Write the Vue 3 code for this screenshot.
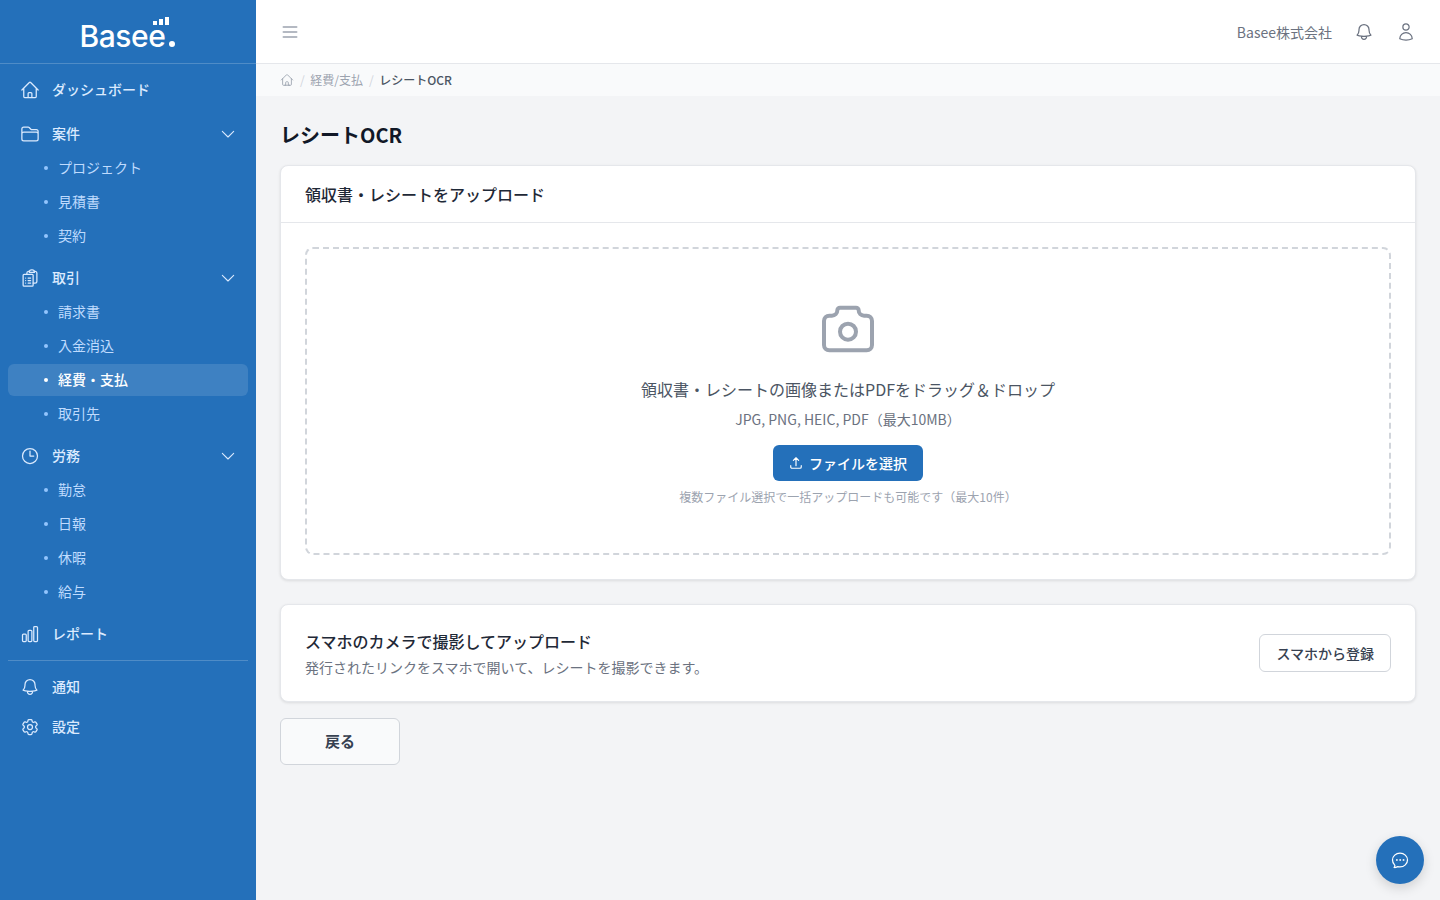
<template>
  <div class="layout" lang="ja">
    <aside class="sidebar">
      <div class="logo">
        <div class="logo-mark">
          <span class="logo-text">Basee</span><span class="logo-dot"></span>
          <span class="logo-bars"><i class="b1"></i><i class="b2"></i><i class="b3"></i></span>
        </div>
      </div>
      <nav class="nav">
        <section v-for="item in menu" :key="item.label" class="nav-group">
          <a class="nav-item">
            <svg class="nav-icon" viewBox="0 0 24 24" fill="none" stroke="currentColor" stroke-width="1.5" stroke-linecap="round" stroke-linejoin="round">
              <path v-for="d in icons[item.icon]" :key="d" :d="d" />
            </svg>
            <span class="nav-text">{{ item.label }}</span>
            <svg v-if="item.children" class="chevron" viewBox="0 0 24 24" fill="none" stroke="currentColor" stroke-width="1.6" stroke-linecap="round" stroke-linejoin="round">
              <path d="M3.5 8l8.5 8.5 8.5-8.5" />
            </svg>
          </a>
          <a
            v-for="child in item.children"
            :key="child"
            class="nav-sub"
            :class="{ active: child === '経費・支払' }"
          >
            <span class="bullet"></span>
            <span class="nav-text">{{ child }}</span>
          </a>
        </section>
        <hr class="nav-line" />
        <div class="nav-bottom">
          <a v-for="item in bottomMenu" :key="item.label" class="nav-item">
            <svg class="nav-icon" viewBox="0 0 24 24" fill="none" stroke="currentColor" stroke-width="1.5" stroke-linecap="round" stroke-linejoin="round">
              <path v-for="d in icons[item.icon]" :key="d" :d="d" />
            </svg>
            <span class="nav-text">{{ item.label }}</span>
          </a>
        </div>
      </nav>
    </aside>

    <div class="main">
      <header class="topbar">
        <svg class="menu-btn" viewBox="0 0 24 24" fill="none" stroke="currentColor" stroke-width="2" stroke-linecap="round">
          <path d="M4 6h16M4 12h16M4 18h16" />
        </svg>
        <div class="top-right">
          <span class="company">Basee株式会社</span>
          <svg class="top-icon" viewBox="0 0 24 24" fill="none" stroke="currentColor" stroke-width="1.5" stroke-linecap="round" stroke-linejoin="round">
            <path v-for="d in icons.bell" :key="d" :d="d" />
          </svg>
          <svg class="top-icon" viewBox="0 0 24 24" fill="none" stroke="currentColor" stroke-width="1.5" stroke-linecap="round" stroke-linejoin="round">
            <path v-for="d in icons.user" :key="d" :d="d" />
          </svg>
        </div>
      </header>

      <div class="crumbs">
        <svg class="crumb-home" viewBox="0 0 24 24" fill="none" stroke="currentColor" stroke-width="1.5" stroke-linecap="round" stroke-linejoin="round">
          <path v-for="d in icons.home" :key="d" :d="d" />
        </svg>
        <span class="sep">/</span>
        <span class="crumb-link">経費/支払</span>
        <span class="sep">/</span>
        <span class="crumb-now">レシートOCR</span>
      </div>

      <main class="content">
        <h1 class="page-title">レシートOCR</h1>

        <div class="card">
          <div class="card-head">領収書・レシートをアップロード</div>
          <div class="card-body">
            <div class="dropzone">
              <svg class="camera" viewBox="0 0 24 24" fill="none" stroke="currentColor" stroke-width="1.5" stroke-linecap="round" stroke-linejoin="round">
                <path d="M5 7h1a2 2 0 0 0 2-2a1 1 0 0 1 1-1h6a1 1 0 0 1 1 1a2 2 0 0 0 2 2h1a2 2 0 0 1 2 2v9a2 2 0 0 1-2 2h-14a2 2 0 0 1-2-2v-9a2 2 0 0 1 2-2" />
                <circle cx="12" cy="13" r="3" />
              </svg>
              <p class="drop-title">領収書・レシートの画像またはPDFをドラッグ＆ドロップ</p>
              <p class="drop-types">JPG, PNG, HEIC, PDF（最大10MB）</p>
              <button class="btn-primary">
                <svg viewBox="0 0 24 24" fill="none" stroke="currentColor" stroke-width="2" stroke-linecap="round" stroke-linejoin="round">
                  <path d="M3 16.5v2.25A2.25 2.25 0 0 0 5.25 21h13.5A2.25 2.25 0 0 0 21 18.75V16.5m-13.5-9L12 3m0 0 4.5 4.5M12 3v13.5" />
                </svg>
                ファイルを選択
              </button>
              <p class="drop-note">複数ファイル選択で一括アップロードも可能です（最大10件）</p>
            </div>
          </div>
        </div>

        <div class="card mobile-card">
          <div class="mobile-info">
            <div class="mobile-title">スマホのカメラで撮影してアップロード</div>
            <div class="mobile-text">発行されたリンクをスマホで開いて、レシートを撮影できます。</div>
          </div>
          <button class="btn-outline">スマホから登録</button>
        </div>

        <button class="btn-back">戻る</button>
      </main>
    </div>

    <button class="chat-btn">
      <svg viewBox="0 0 24 24" fill="none" stroke="currentColor" stroke-width="1.5" stroke-linecap="round" stroke-linejoin="round">
        <path d="M8.625 12a.375.375 0 1 1-.75 0 .375.375 0 0 1 .75 0Zm4 0a.375.375 0 1 1-.75 0 .375.375 0 0 1 .75 0Zm4 0a.375.375 0 1 1-.75 0 .375.375 0 0 1 .75 0Z" />
        <path d="M12 20.25c4.97 0 9-3.694 9-8.25s-4.03-8.25-9-8.25S3 7.444 3 12c0 2.104.859 4.023 2.273 5.48.432.447.74 1.04.586 1.641a4.483 4.483 0 0 1-.923 1.785A5.969 5.969 0 0 0 6 21c1.282 0 2.47-.402 3.445-1.087.81.22 1.668.337 2.555.337Z" />
      </svg>
    </button>
  </div>
</template>

<script setup>
const icons = {
  home: ['m2.25 12 8.954-8.955c.44-.439 1.152-.439 1.591 0L21.75 12M4.5 9.75v10.125c0 .621.504 1.125 1.125 1.125H9.75v-4.875c0-.621.504-1.125 1.125-1.125h2.25c.621 0 1.125.504 1.125 1.125V21h4.125c.621 0 1.125-.504 1.125-1.125V9.75M8.25 21h8.25'],
  folder: ['M2.25 12.75V12A2.25 2.25 0 0 1 4.5 9.75h15A2.25 2.25 0 0 1 21.75 12v.75m-8.69-6.44-2.12-2.12a1.5 1.5 0 0 0-1.061-.44H4.5A2.25 2.25 0 0 0 2.25 6v12a2.25 2.25 0 0 0 2.25 2.25h15A2.25 2.25 0 0 0 21.75 18V9a2.25 2.25 0 0 0-2.25-2.25h-5.379a1.5 1.5 0 0 1-1.06-.44Z'],
  docs: [
    'M8.25 7.5V6.108c0-1.135.845-2.098 1.976-2.192.373-.03.748-.057 1.123-.08M15.75 18H18a2.25 2.25 0 0 0 2.25-2.25V6.108c0-1.135-.845-2.098-1.976-2.192a48.424 48.424 0 0 0-1.123-.08',
    'M17.15 3.836A2.251 2.251 0 0 0 15 2.25h-1.5a2.251 2.251 0 0 0-2.15 1.586m5.8 0c.065.21.1.433.1.664v.75h-6V4.5c0-.231.035-.454.1-.664',
    'M4.875 7.5h9.75c.621 0 1.125.504 1.125 1.125v12c0 .621-.504 1.125-1.125 1.125h-9.75c-.621 0-1.125-.504-1.125-1.125v-12c0-.621.504-1.125 1.125-1.125Z',
    'M6.75 12h.008M6.75 15h.008M6.75 18h.008M9.75 12h3M9.75 15h3M9.75 18h3',
  ],
  clock: ['M12 6v6h4.5m4.5 0a9 9 0 1 1-18 0 9 9 0 0 1 18 0Z'],
  chart: ['M3 13.125C3 12.504 3.504 12 4.125 12h2.25c.621 0 1.125.504 1.125 1.125v6.75C7.5 20.496 6.996 21 6.375 21h-2.25A1.125 1.125 0 0 1 3 19.875v-6.75ZM9.75 8.625c0-.621.504-1.125 1.125-1.125h2.25c.621 0 1.125.504 1.125 1.125v11.25c0 .621-.504 1.125-1.125 1.125h-2.25a1.125 1.125 0 0 1-1.125-1.125V8.625ZM16.5 4.125c0-.621.504-1.125 1.125-1.125h2.25C20.496 3 21 3.504 21 4.125v15.75c0 .621-.504 1.125-1.125 1.125h-2.25a1.125 1.125 0 0 1-1.125-1.125V4.125Z'],
  bell: ['M14.857 17.082a23.848 23.848 0 0 0 5.454-1.31A8.967 8.967 0 0 1 18 9.75V9A6 6 0 0 0 6 9v.75a8.967 8.967 0 0 1-2.312 6.022c1.733.64 3.56 1.085 5.455 1.31m5.714 0a24.255 24.255 0 0 1-5.714 0m5.714 0a3 3 0 1 1-5.714 0'],
  user: ['M15.75 6a3.75 3.75 0 1 1-7.5 0 3.75 3.75 0 0 1 7.5 0ZM4.501 20.118a7.5 7.5 0 0 1 14.998 0A17.933 17.933 0 0 1 12 21.75c-2.676 0-5.216-.584-7.499-1.632Z'],
  cog: [
    'M9.594 3.94c.09-.542.56-.94 1.11-.94h2.593c.55 0 1.02.398 1.11.94l.213 1.281c.063.374.313.686.645.87.074.04.147.083.22.127.325.196.72.257 1.075.124l1.217-.456a1.125 1.125 0 0 1 1.37.49l1.296 2.247a1.125 1.125 0 0 1-.26 1.431l-1.003.827c-.293.241-.438.613-.43.992a7.723 7.723 0 0 1 0 .255c-.008.378.137.75.43.991l1.004.827c.424.35.534.955.26 1.43l-1.298 2.247a1.125 1.125 0 0 1-1.369.491l-1.217-.456c-.355-.133-.75-.072-1.076.124a6.47 6.47 0 0 1-.22.128c-.331.183-.581.495-.644.869l-.213 1.281c-.09.543-.56.94-1.11.94h-2.594c-.55 0-1.019-.398-1.11-.94l-.213-1.281c-.062-.374-.312-.686-.644-.87a6.52 6.52 0 0 1-.22-.127c-.325-.196-.72-.257-1.076-.124l-1.217.456a1.125 1.125 0 0 1-1.369-.49l-1.297-2.247a1.125 1.125 0 0 1 .26-1.431l1.004-.827c.292-.24.437-.613.43-.991a6.932 6.932 0 0 1 0-.255c.007-.38-.138-.751-.43-.992l-1.004-.827a1.125 1.125 0 0 1-.26-1.43l1.297-2.247a1.125 1.125 0 0 1 1.37-.491l1.216.456c.356.133.751.072 1.076-.124.072-.044.146-.086.22-.128.332-.183.582-.495.644-.869l.214-1.28Z',
    'M15 12a3 3 0 1 1-6 0 3 3 0 0 1 6 0Z',
  ],
}

const menu = [
  { label: 'ダッシュボード', icon: 'home' },
  { label: '案件', icon: 'folder', children: ['プロジェクト', '見積書', '契約'] },
  { label: '取引', icon: 'docs', children: ['請求書', '入金消込', '経費・支払', '取引先'] },
  { label: '労務', icon: 'clock', children: ['勤怠', '日報', '休暇', '給与'] },
  { label: 'レポート', icon: 'chart' },
]

const bottomMenu = [
  { label: '通知', icon: 'bell' },
  { label: '設定', icon: 'cog' },
]
</script>

<style>
html,
body {
  margin: 0;
  background: #f3f4f6;
}
</style>

<style scoped>
.layout {
  display: flex;
  min-height: 900px;
  font-family: "Noto Sans CJK JP", "Noto Sans", sans-serif;
  color: #111827;
}
.sidebar {
  width: 256px;
  flex-shrink: 0;
  background: #2470ba;
  color: #dbeafe;
}
.logo {
  height: 63px;
  border-bottom: 1px solid rgba(255, 255, 255, 0.2);
  display: flex;
  justify-content: center;
  align-items: flex-end;
}
.logo-mark {
  position: relative;
  display: flex;
  align-items: baseline;
  margin-right: 1.5px;
  padding-bottom: 10px;
}
.logo-text {
  font-family: Inter, sans-serif;
  font-size: 30px;
  font-weight: 500;
  line-height: 34px;
  letter-spacing: -0.4px;
  color: #fff;
}
.logo-dot {
  width: 6px;
  height: 6px;
  margin-left: 3.5px;
  border-radius: 50%;
  background: #fff;
}
.logo-bars {
  position: absolute;
  right: 6px;
  top: -2px;
  display: flex;
  align-items: flex-end;
  gap: 2px;
  height: 8px;
}
.logo-bars i {
  width: 4px;
  background: #fff;
}
.b1 { height: 4px; }
.b2 { height: 6px; }
.b3 { height: 8px; }
.nav {
  padding: 8px;
}
.nav-group {
  margin-bottom: 8px;
}
.nav-item {
  height: 36px;
  padding: 0 12px;
  display: flex;
  align-items: center;
  gap: 12px;
  font-size: 14px;
  font-weight: 500;
  line-height: 20px;
  color: #dbeafe;
}
.nav-text {
  margin-bottom: 2px;
}
.nav-icon {
  width: 20px;
  height: 20px;
  flex-shrink: 0;
}
.chevron {
  width: 16px;
  height: 16px;
  margin-left: auto;
}
.nav-sub {
  height: 32px;
  margin-bottom: 2px;
  padding-left: 36px;
  display: flex;
  align-items: center;
  border-radius: 6px;
  font-size: 14px;
  line-height: 20px;
  color: #bfdbfe;
}
.nav-sub:last-child {
  margin-bottom: 0;
}
.nav-sub.active {
  background: rgba(255, 255, 255, 0.12);
  color: #fff;
  font-weight: 500;
}
.bullet {
  width: 4px;
  height: 4px;
  margin-right: 10px;
  border-radius: 50%;
  background: #93c5fd;
}
.active .bullet {
  background: #fff;
}
.nav-line {
  margin: 0 0 8px;
  border: 0;
  border-top: 1px solid rgba(255, 255, 255, 0.2);
}
.nav-bottom {
  display: flex;
  flex-direction: column;
  gap: 4px;
}
.main {
  flex: 1;
  min-width: 0;
}
.topbar {
  height: 63px;
  padding: 0 24px;
  display: flex;
  align-items: center;
  justify-content: space-between;
  background: #fff;
  border-bottom: 1px solid #e5e7eb;
}
.menu-btn {
  width: 20px;
  height: 20px;
  color: #9ca3af;
}
.top-right {
  display: flex;
  align-items: center;
  gap: 22px;
}
.company {
  font-size: 14px;
  line-height: 20px;
  color: #6b7280;
}
.top-icon {
  width: 20px;
  height: 20px;
  color: #6b7280;
}
.crumbs {
  height: 32px;
  padding: 0 24px;
  display: flex;
  align-items: center;
  gap: 6px;
  background: #f9fafb;
  font-size: 12px;
  line-height: 16px;
}
.crumb-home {
  width: 14px;
  height: 14px;
  color: #9ca3af;
}
.sep {
  color: #d1d5db;
}
.crumb-link {
  margin-left: -0.5px;
  color: #9ca3af;
}
.crumb-now {
  margin-left: -0.5px;
  color: #4b5563;
  font-weight: 500;
}
.content {
  padding: 24px;
}
.page-title {
  margin: 0 0 15px;
  font-size: 20px;
  font-weight: 700;
  line-height: 30px;
}
.card {
  background: #fff;
  border: 1px solid #e5e7eb;
  border-radius: 8px;
  box-shadow: 0 1px 3px rgba(0, 0, 0, 0.1);
}
.card-head {
  padding: 16px 24px;
  border-bottom: 1px solid #e5e7eb;
  font-size: 16px;
  font-weight: 500;
  line-height: 24px;
  color: #1f2937;
}
.card-body {
  padding: 24px;
}
.dropzone {
  box-sizing: border-box;
  height: 308px;
  padding-top: 48px;
  border: 2px dashed #d1d5db;
  border-radius: 8px;
  display: flex;
  flex-direction: column;
  align-items: center;
}
.camera {
  width: 64px;
  height: 64px;
  color: #9ca3af;
}
.drop-title {
  margin: 16px 0 0;
  font-size: 16px;
  line-height: 24px;
  color: #4b5563;
}
.drop-types {
  margin: 8px 0 0;
  font-size: 14px;
  line-height: 20px;
  color: #6b7280;
}
.btn-primary {
  margin-top: 16px;
  height: 36px;
  padding: 0 16px;
  display: flex;
  align-items: center;
  gap: 6px;
  border: 0;
  border-radius: 6px;
  background: #2470ba;
  color: #fff;
  font-family: inherit;
  font-size: 14px;
  font-weight: 500;
  line-height: 20px;
}
.btn-primary svg {
  width: 14px;
  height: 14px;
}
.drop-note {
  margin: 8px 0 0;
  font-size: 12px;
  line-height: 16px;
  color: #9ca3af;
}
.mobile-card {
  margin-top: 24px;
  padding: 24px;
  display: flex;
  align-items: center;
  justify-content: space-between;
}
.mobile-info {
  display: flex;
  flex-direction: column;
  gap: 4px;
}
.mobile-title {
  font-size: 16px;
  font-weight: 500;
  line-height: 24px;
  color: #1f2937;
}
.mobile-text {
  font-size: 14px;
  line-height: 20px;
  color: #6b7280;
}
.btn-outline {
  height: 38px;
  padding: 0 16px 1px;
  background: #fff;
  border: 1px solid #d1d5db;
  border-radius: 6px;
  font-family: inherit;
  font-size: 14px;
  font-weight: 500;
  line-height: 20px;
  color: #374151;
}
.btn-back {
  display: block;
  width: 120px;
  height: 47px;
  margin-top: 16px;
  padding: 0 0 1px;
  background: #f9fafb;
  border: 1px solid #d1d5db;
  border-radius: 6px;
  font-family: inherit;
  font-size: 15px;
  font-weight: 700;
  line-height: 20px;
  color: #374151;
}
.chat-btn {
  position: fixed;
  right: 16px;
  bottom: 16px;
  width: 48px;
  height: 48px;
  padding: 0;
  display: flex;
  align-items: center;
  justify-content: center;
  border: 0;
  border-radius: 50%;
  background: #2470ba;
  color: #fff;
  box-shadow: 0 4px 12px rgba(0, 0, 0, 0.15);
}
.chat-btn svg {
  width: 20px;
  height: 20px;
}
</style>
